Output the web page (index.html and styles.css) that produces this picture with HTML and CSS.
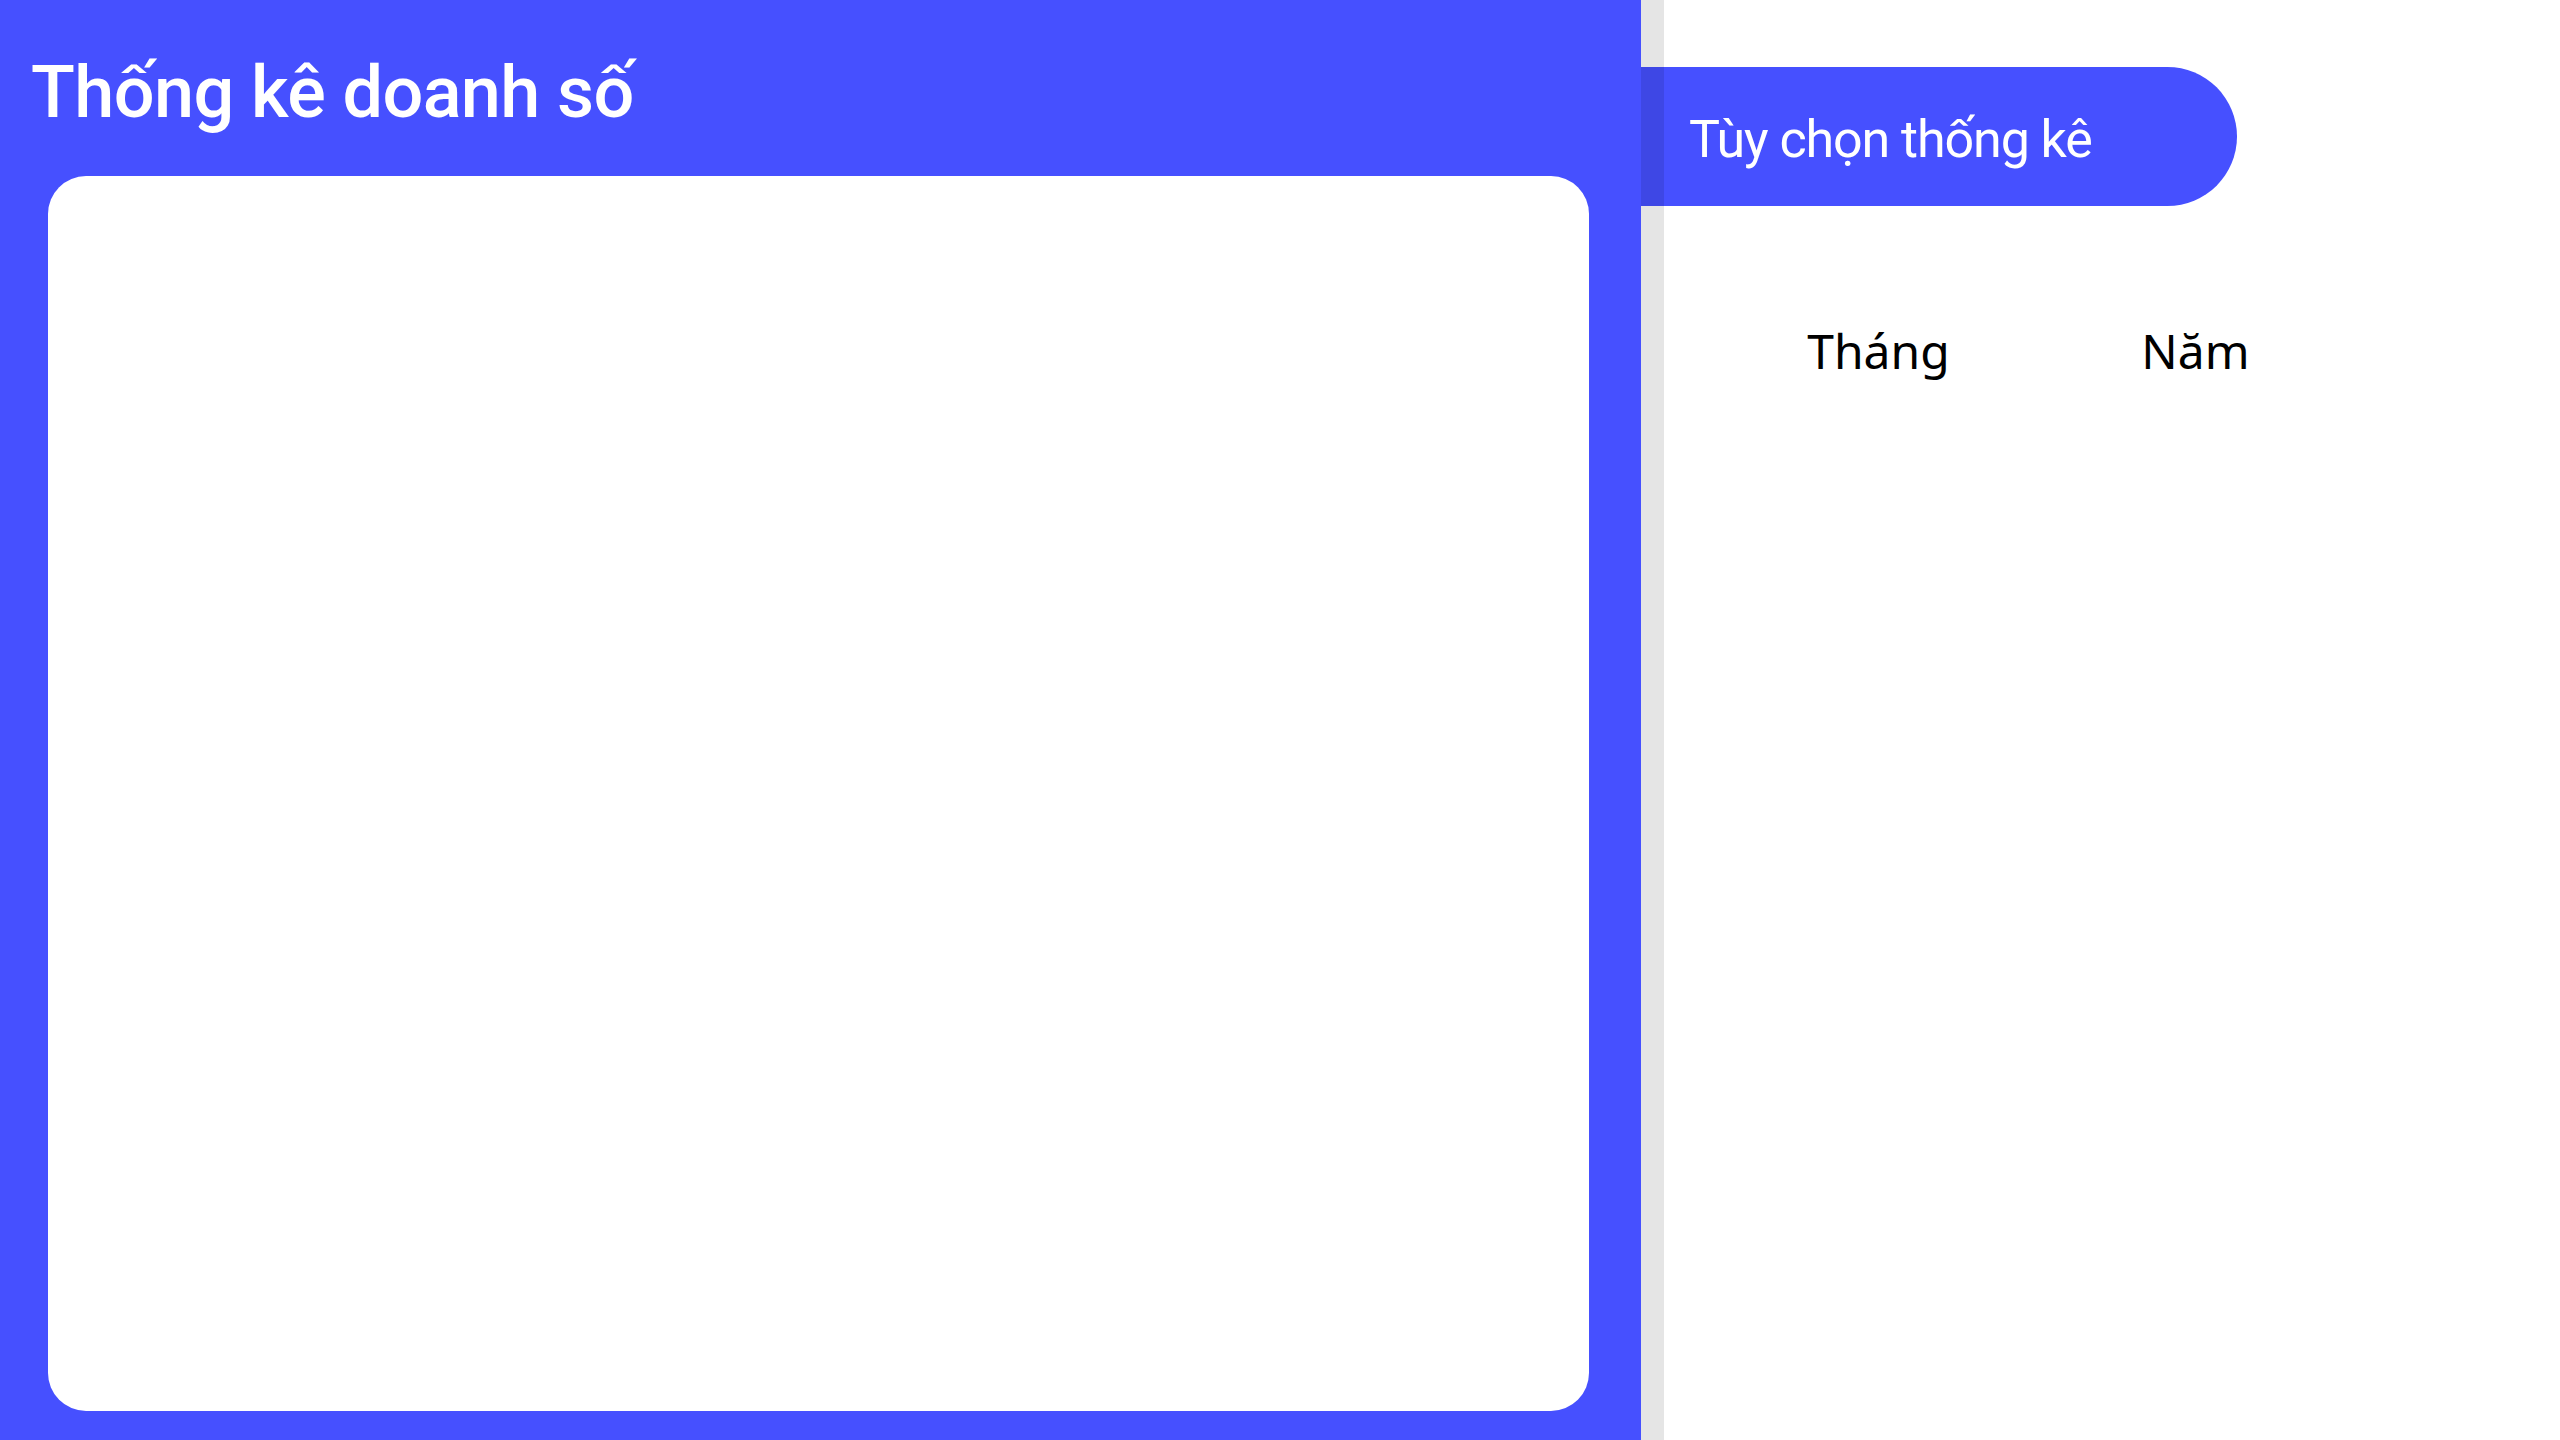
FILE: index.html
```html
<!DOCTYPE html>
<html lang="vi">
<head>
<meta charset="utf-8">
<title>Thống kê doanh số</title>
<link rel="stylesheet" href="styles.css">
</head>
<body>
<div class="page">
  <section class="sales">
    <h1 class="sales-title">Thống kê doanh số</h1>
    <div class="chart-card"></div>
  </section>
  <aside class="options">
    <div class="options-pill">Tùy chọn thống kê</div>
    <div class="options-tabs">
      <div class="options-tab">Tháng</div>
      <div class="options-tab">Năm</div>
    </div>
  </aside>
</div>
</body>
</html>
```
FILE: styles.css
```css
* { box-sizing: border-box; }
html, body { margin: 0; padding: 0; }
body {
  width: 2560px;
  height: 1440px;
  overflow: hidden;
  background: #ffffff;
}
.page {
  display: flex;
  height: 1440px;
}
.sales {
  width: 1641px;
  background: #4650ff;
  display: flex;
  flex-direction: column;
  padding: 57px 52px 29px 31px;
}
.sales-title {
  margin: 0;
  font-family: Roboto, "Noto Sans", sans-serif;
  font-weight: 500;
  font-size: 72px;
  line-height: 72px;
  letter-spacing: -0.6px;
  color: #ffffff;
}
.chart-card {
  flex: 1;
  margin: 47px 0 0 17px;
  background: #ffffff;
  border-radius: 38px;
}
.options {
  flex: 1;
  position: relative;
  padding-top: 67px;
}
.options::before {
  content: "";
  position: absolute;
  left: 0;
  top: 0;
  bottom: 0;
  width: 23px;
  background: rgba(0, 0, 0, 0.1);
  z-index: 1;
}
.options-pill {
  width: 596px;
  height: 139px;
  background: #4650ff;
  border-radius: 0 70px 70px 0;
  display: flex;
  align-items: center;
  padding: 5px 0 0 48px;
  font-family: Roboto, "Noto Sans", sans-serif;
  font-size: 52px;
  letter-spacing: -1.1px;
  color: #ffffff;
}
.options-tabs {
  display: flex;
  margin-top: 120px;
  padding-left: 79px;
}
.options-tab {
  width: 317px;
  text-align: center;
  font-family: "Noto Sans", sans-serif;
  font-size: 48px;
  line-height: 50px;
  color: #000000;
}
```
